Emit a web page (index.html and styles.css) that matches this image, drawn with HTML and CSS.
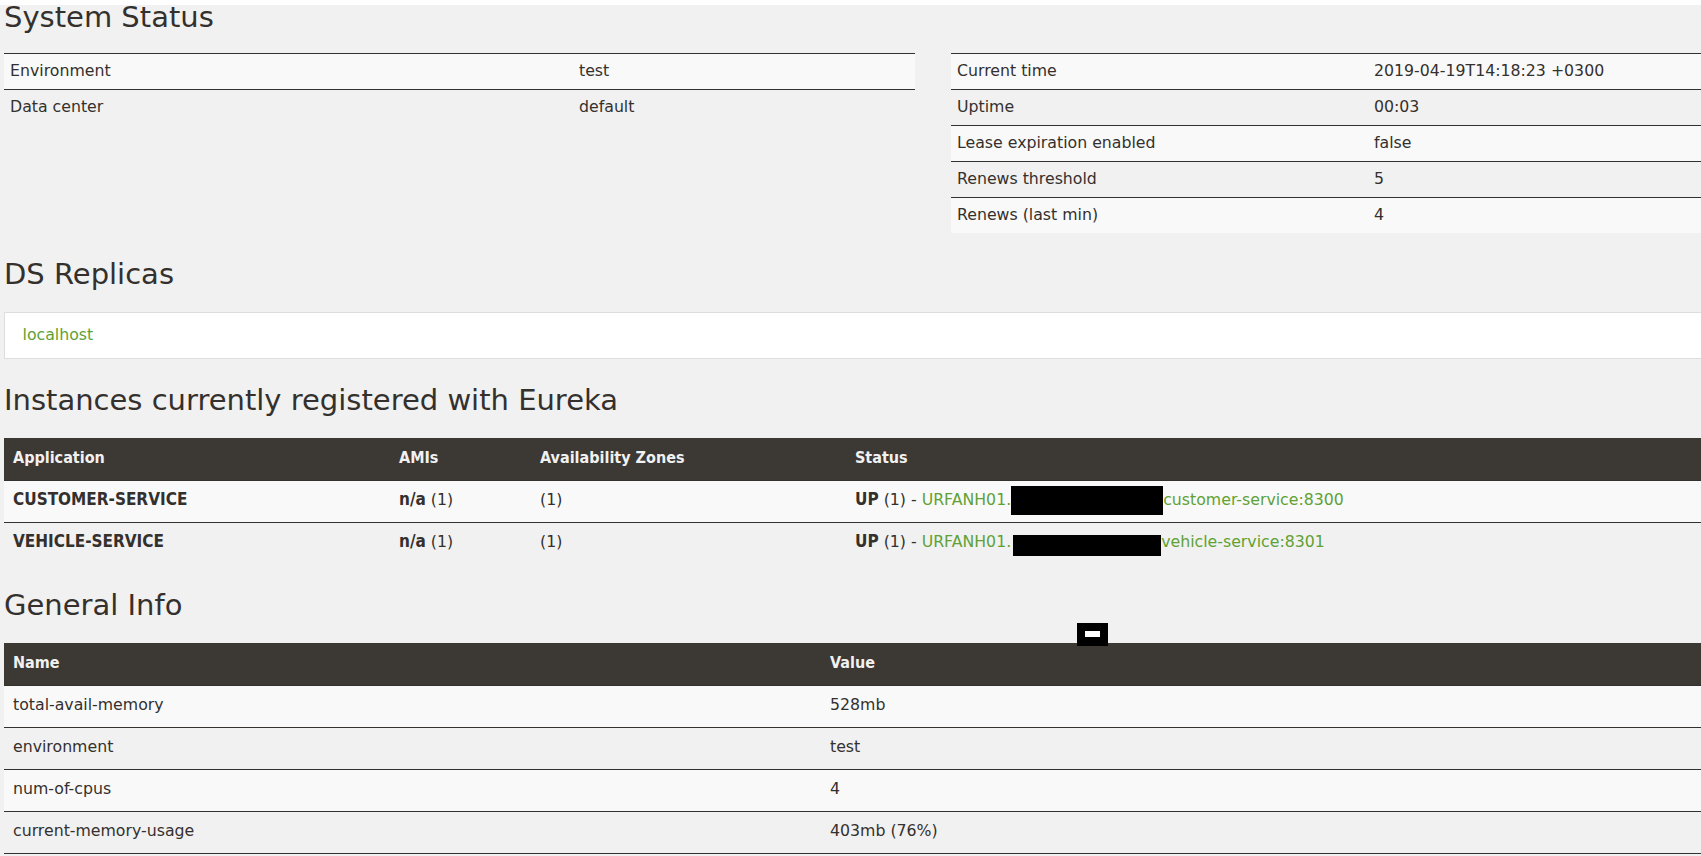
FILE: index.html
```html
<!DOCTYPE html>
<html lang="en">
<head>
<meta charset="utf-8">
<title>Eureka</title>
<link rel="stylesheet" href="styles.css">
</head>
<body>
<div class="topbar"></div>
<main class="page">
  <h1 class="first">System Status</h1>
  <div class="two-col">
    <div class="col">
      <table class="status-table">
        <colgroup><col class="c-left-key"><col></colgroup>
        <tbody>
          <tr><td>Environment</td><td>test</td></tr>
          <tr><td>Data center</td><td>default</td></tr>
        </tbody>
      </table>
    </div>
    <div class="col">
      <table class="status-table">
        <colgroup><col class="c-right-key"><col></colgroup>
        <tbody>
          <tr><td>Current time</td><td>2019-04-19T14:18:23 +0300</td></tr>
          <tr><td>Uptime</td><td>00:03</td></tr>
          <tr><td>Lease expiration enabled</td><td>false</td></tr>
          <tr><td>Renews threshold</td><td>5</td></tr>
          <tr><td>Renews (last min)</td><td>4</td></tr>
        </tbody>
      </table>
    </div>
  </div>

  <h1>DS Replicas</h1>
  <ul class="replicas">
    <li><a href="#">localhost</a></li>
  </ul>

  <h1>Instances currently registered with Eureka</h1>
  <table class="data-table">
    <colgroup><col class="c-app"><col class="c-ami"><col class="c-az"><col></colgroup>
    <thead>
      <tr><th>Application</th><th>AMIs</th><th>Availability Zones</th><th>Status</th></tr>
    </thead>
    <tbody>
      <tr>
        <td><b>CUSTOMER-SERVICE</b></td>
        <td><b>n/a</b> (1)</td>
        <td>(1)</td>
        <td><b>UP</b> (1) - <a href="#">URFANH01.</a><span class="redact r1"></span><a href="#">customer-service:8300</a></td>
      </tr>
      <tr>
        <td><b>VEHICLE-SERVICE</b></td>
        <td><b>n/a</b> (1)</td>
        <td>(1)</td>
        <td><b>UP</b> (1) - <a href="#">URFANH01.</a><span class="redact r2"></span><a href="#">vehicle-service:8301</a></td>
      </tr>
    </tbody>
  </table>

  <h1>General Info</h1>
  <table class="data-table info-table">
    <colgroup><col class="c-name"><col></colgroup>
    <thead>
      <tr><th>Name</th><th>Value</th></tr>
    </thead>
    <tbody>
      <tr><td>total-avail-memory</td><td>528mb</td></tr>
      <tr><td>environment</td><td>test</td></tr>
      <tr><td>num-of-cpus</td><td>4</td></tr>
      <tr><td>current-memory-usage</td><td>403mb (76%)</td></tr>
    </tbody>
  </table>
</main>
<div class="redact-mark"></div>
</body>
</html>
```

FILE: styles.css
```css
html, body {
  overflow: hidden;
}

body {
  margin: 0;
  background: #f1f1f1;
  color: #34302d;
  font-family: "DejaVu Sans", "Liberation Sans", sans-serif;
  font-size: 15.75px;
  line-height: 20px;
}

.topbar {
  height: 5px;
  background: #ffffff;
}

.page {
  padding-left: 4px;
}

h1 {
  font-family: "DejaVu Sans", "Liberation Sans", sans-serif;
  font-weight: normal;
  font-size: 29px;
  line-height: 24px;
  margin: 29px 0 26px;
  color: #34302d;
}

h1.first {
  margin: 0 0 24px;
}

a {
  color: #5fa134;
  text-decoration: none;
}

b {
  font-family: "DejaVu Sans Condensed", "DejaVu Sans", sans-serif;
  font-stretch: condensed;
  font-weight: bold;
  font-size: 17px;
  line-height: 1;
}

/* ---------- system status ---------- */
.two-col {
  display: grid;
  grid-template-columns: 911px 1fr;
  column-gap: 36px;
  align-items: start;
}

.col {
  min-width: 0;
}

table {
  border-collapse: separate;
  border-spacing: 0;
  table-layout: fixed;
  width: 100%;
}

.c-left-key { width: 569px; }
.c-right-key { width: 417px; }

.status-table td {
  border-top: 1px solid #34302d;
  padding: 7px 6px 8px;
  text-align: left;
  white-space: nowrap;
}

.status-table tbody tr:nth-child(odd) td,
.data-table tbody tr:nth-child(odd) td {
  background: #f9f9f9;
}

/* ---------- replicas ---------- */
.replicas {
  list-style: none;
  margin: 0;
  padding: 0;
  background: #ffffff;
  border: 1px solid #dddddd;
  border-right: none;
}

.replicas li {
  padding: 11.5px 17.5px 13.5px;
}

/* ---------- data tables ---------- */
.c-app { width: 386px; }
.c-ami { width: 141px; }
.c-az { width: 315px; }
.c-name { width: 817px; }

.data-table th {
  background: #3c3834;
  color: #f1f1f1;
  font-family: "DejaVu Sans Condensed", "DejaVu Sans", sans-serif;
  font-stretch: condensed;
  font-weight: bold;
  font-size: 16px;
  text-align: left;
  padding: 10px 9px 12px;
  line-height: 20px;
}

.data-table td {
  border-top: 1px solid #34302d;
  padding: 9px 9px 12px;
  white-space: nowrap;
}

.info-table tbody tr:last-child td {
  border-bottom: 1px solid #34302d;
}

.redact {
  display: inline-block;
  background: #000000;
  vertical-align: top;
}

.redact.r1 {
  width: 152px;
  height: 29px;
  margin: -4px 0 -5px;
}

.redact.r2 {
  width: 148px;
  height: 21px;
  margin: 3px 0 -4px 2px;
}

.redact-mark {
  position: absolute;
  left: 1077px;
  top: 623px;
  width: 15px;
  height: 6px;
  background: #ffffff;
  border: 8px solid #000000;
  border-bottom-width: 9px;
}
```
